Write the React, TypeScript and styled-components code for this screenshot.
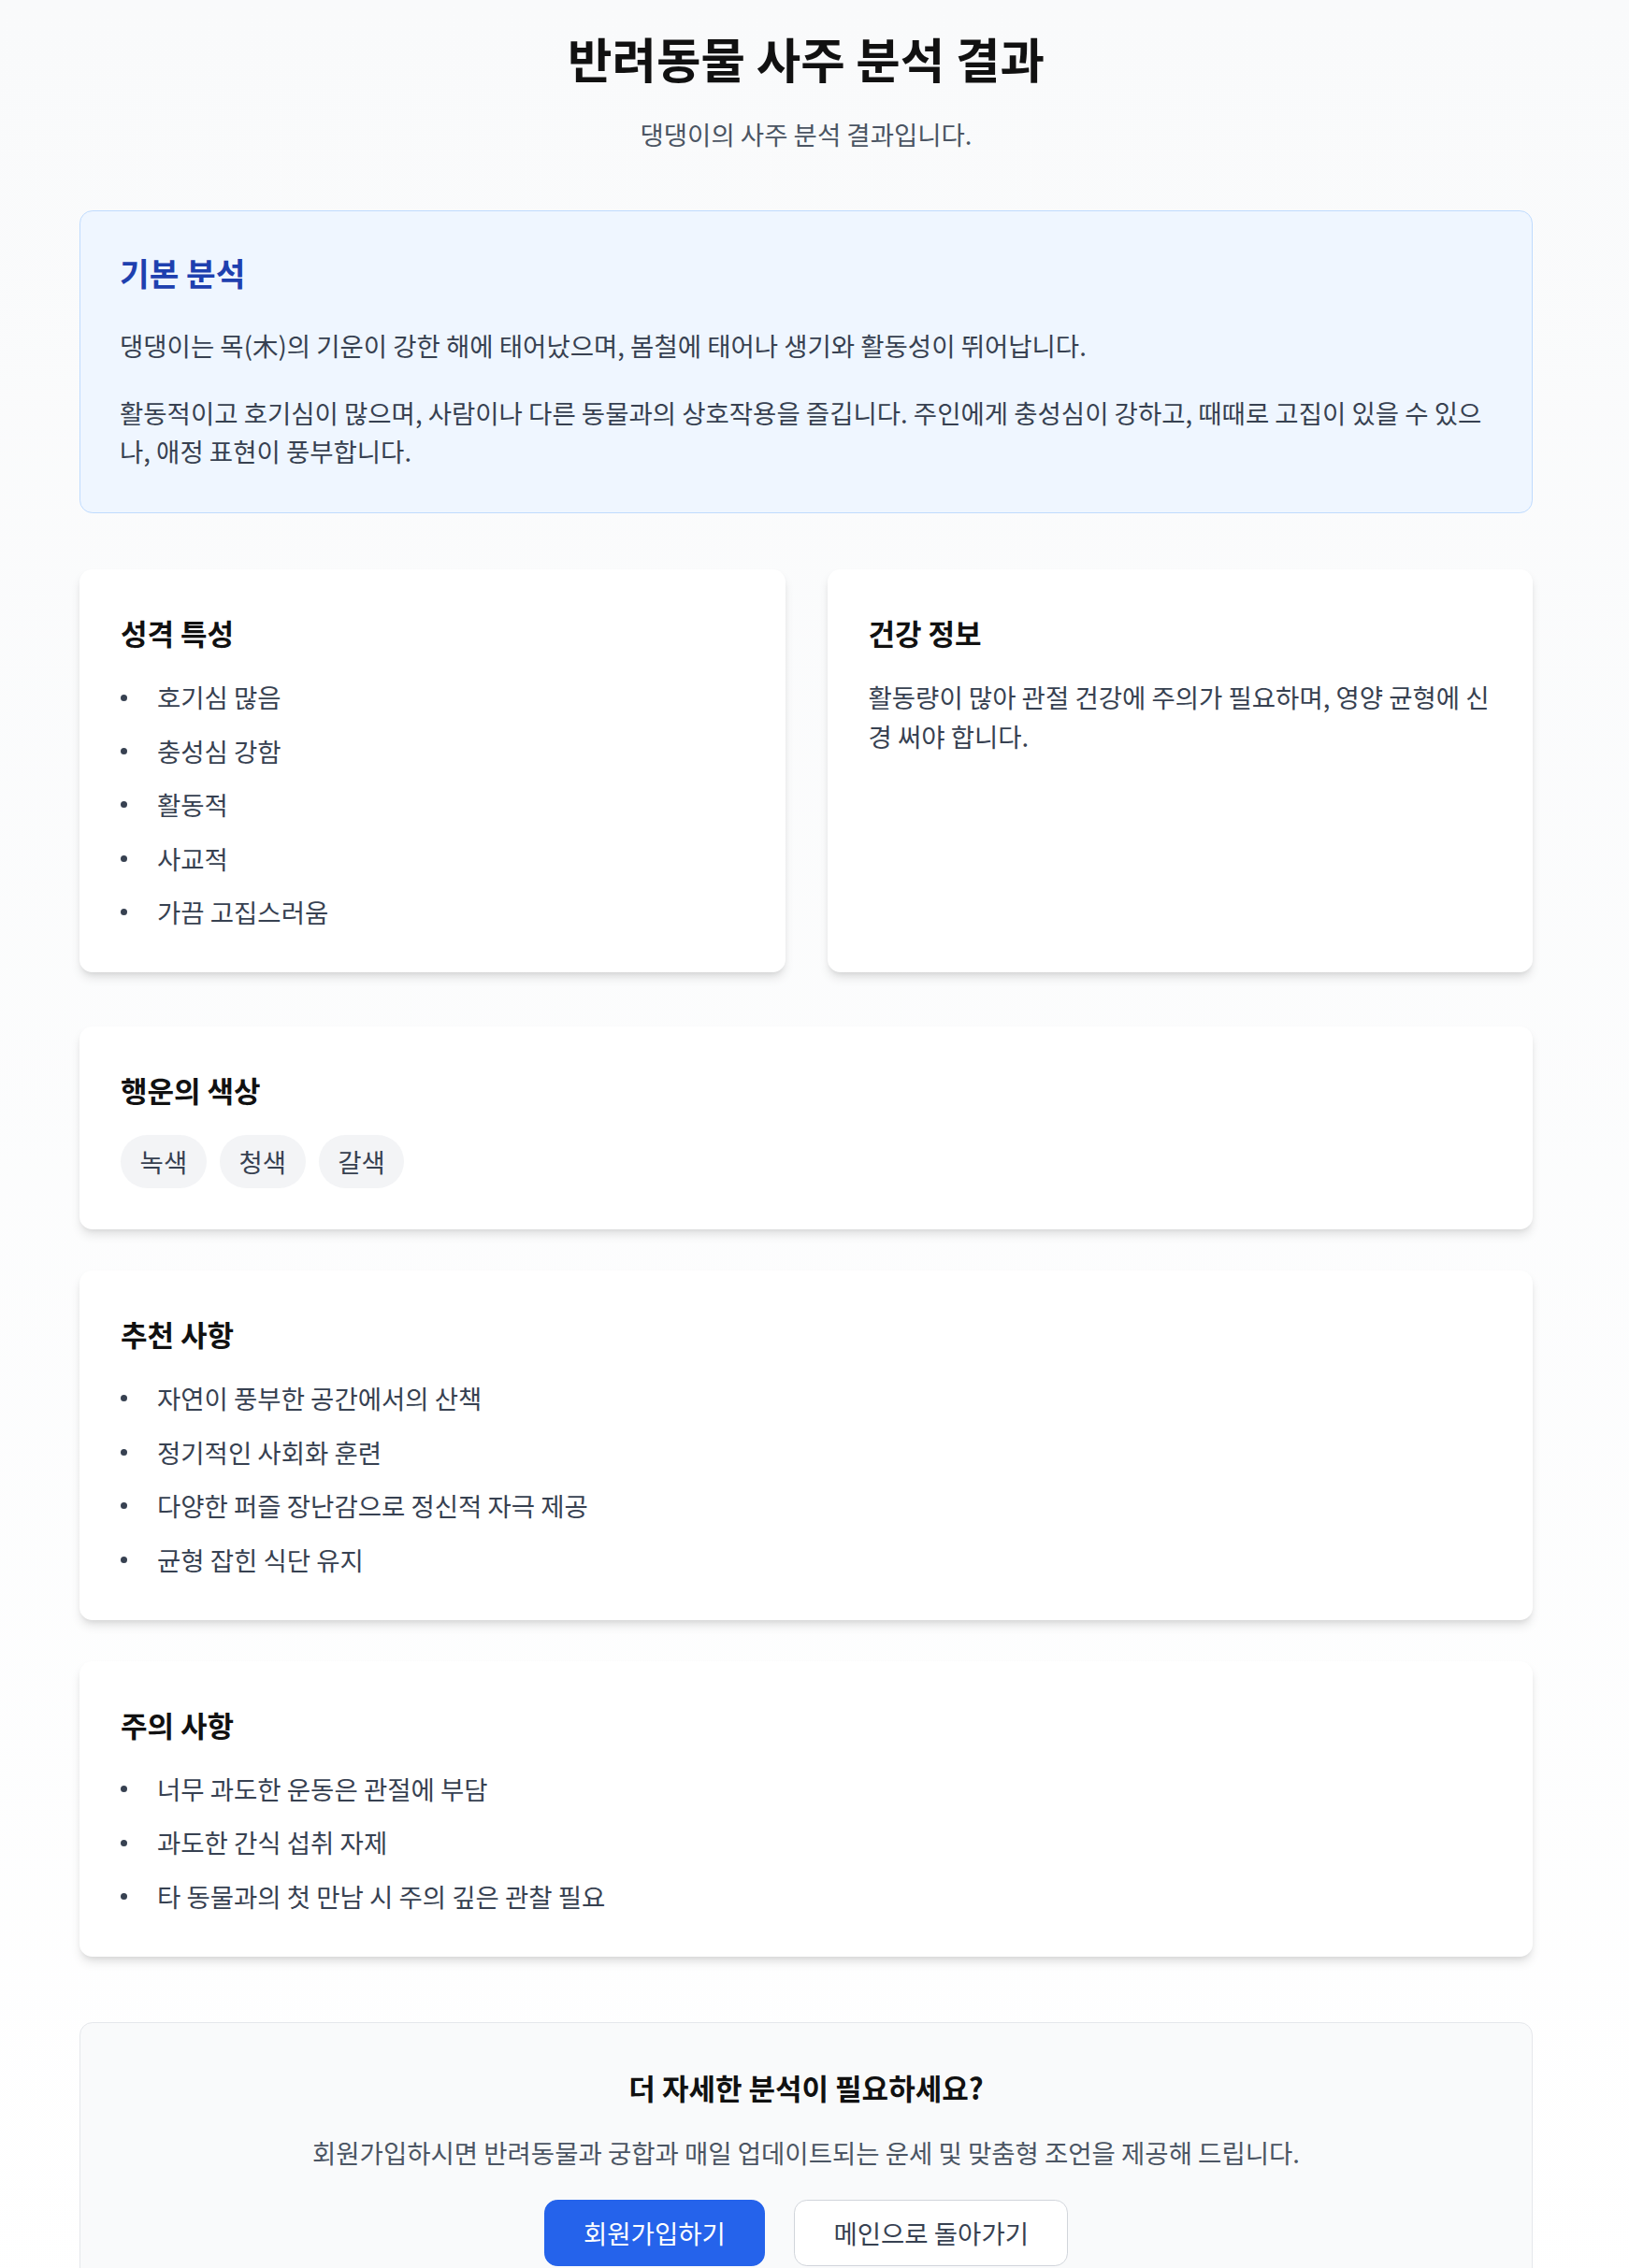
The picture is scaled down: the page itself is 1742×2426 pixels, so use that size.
import { createGlobalStyle, styled } from "styled-components";

const GlobalStyle = createGlobalStyle`
  * {
    box-sizing: border-box;
  }

  html,
  body {
    margin: 0;
    padding: 0;
  }

  body {
    font-family: "Noto Sans CJK KR", "Noto Sans", sans-serif;
    background: linear-gradient(to bottom, #f9fafb, #ffffff);
    min-height: 100vh;
    color: #111;
  }
`;

const Page = styled.div`
  padding: 30.5px 0 40px 85px;
`;

const Container = styled.main`
  width: 1554px;
  display: flex;
  flex-direction: column;
`;

const Header = styled.header`
  text-align: center;
  margin-bottom: 60.3px;
`;

const Title = styled.h1`
  margin: 0 0 31px;
  font-size: 51.6px;
  line-height: 61.9px;
  font-weight: 700;
  color: #111;
`;

const Subtitle = styled.p`
  margin: 0;
  font-size: 27.5px;
  line-height: 41.3px;
  color: #4b5563;
`;

const SummaryCard = styled.section`
  background: #eff6ff;
  border: 1.7px solid #bfdbfe;
  border-radius: 13.8px;
  padding: 40.5px 42px 44.3px;
  margin-bottom: 60.1px;
`;

const SummaryTitle = styled.h2`
  margin: 0 0 33.8px;
  font-size: 34.4px;
  line-height: 48.2px;
  font-weight: 700;
  color: #1e40af;
`;

const Paragraph = styled.p<{ $mb?: number }>`
  margin: 0 0 ${({ $mb }) => $mb ?? 0}px;
  font-size: 27.5px;
  line-height: 41.3px;
  color: #374151;
`;

const Grid = styled.div`
  display: grid;
  grid-template-columns: 1fr 1fr;
  gap: 45px;
  margin-bottom: 57.4px;
`;

const Card = styled.section<{ $mb?: number }>`
  background: #ffffff;
  border-radius: 13.8px;
  padding: 44px;
  margin-bottom: ${({ $mb }) => $mb ?? 0}px;
  box-shadow:
    0 6.9px 10.3px -1.7px rgba(0, 0, 0, 0.1),
    0 3.4px 6.9px -3.4px rgba(0, 0, 0, 0.1);
`;

const CardTitle = styled.h3`
  margin: 0 0 24px;
  font-size: 31px;
  line-height: 48.2px;
  font-weight: 700;
  color: #111;
`;

const List = styled.ul`
  list-style: none;
  margin: 0;
  padding: 0;
  display: flex;
  flex-direction: column;
  gap: 16.1px;
`;

const Item = styled.li`
  display: flex;
  align-items: center;
  font-size: 27.5px;
  line-height: 41.3px;
  color: #374151;

  &::before {
    content: "";
    flex-shrink: 0;
    width: 7px;
    height: 7px;
    border-radius: 50%;
    background: #374151;
    margin-right: 32px;
  }
`;

const Chips = styled.div`
  display: flex;
  gap: 14px;
`;

const Chip = styled.span`
  padding: 8px 20.6px;
  border-radius: 9999px;
  background: #f3f4f6;
  color: #374151;
  font-size: 27.5px;
  line-height: 41.3px;
`;

const Cta = styled.section`
  background: #f9fafb;
  border: 1.7px solid #e5e7eb;
  border-radius: 13.8px;
  padding: 45px 42px 60px;
  text-align: center;
`;

const CtaTitle = styled.h3`
  margin: 0 0 25px;
  font-size: 31px;
  line-height: 48.2px;
  font-weight: 700;
  color: #111;
`;

const CtaText = styled.p`
  margin: 0 0 29.3px;
  font-size: 27.5px;
  line-height: 41.3px;
  color: #4b5563;
`;

const Actions = styled.div`
  display: flex;
  justify-content: center;
  gap: 31px;
`;

const Button = styled.button<{ $variant?: "primary" | "outline" }>`
  font-family: inherit;
  font-size: 27.5px;
  line-height: 41.3px;
  padding: 13.8px 41.3px;
  border-radius: 13.8px;
  cursor: pointer;
  border: 1.7px solid
    ${({ $variant }) => ($variant === "primary" ? "#2563eb" : "#d1d5db")};
  background: ${({ $variant }) =>
    $variant === "primary" ? "#2563eb" : "#ffffff"};
  color: ${({ $variant }) => ($variant === "primary" ? "#ffffff" : "#374151")};
`;

const traits = ["호기심 많음", "충성심 강함", "활동적", "사교적", "가끔 고집스러움"];
const colors = ["녹색", "청색", "갈색"];
const recommendations = [
  "자연이 풍부한 공간에서의 산책",
  "정기적인 사회화 훈련",
  "다양한 퍼즐 장난감으로 정신적 자극 제공",
  "균형 잡힌 식단 유지",
];
const cautions = [
  "너무 과도한 운동은 관절에 부담",
  "과도한 간식 섭취 자제",
  "타 동물과의 첫 만남 시 주의 깊은 관찰 필요",
];

const App = () => {
  return (
    <>
      <GlobalStyle />
      <Page>
        <Container>
          <Header>
            <Title>반려동물 사주 분석 결과</Title>
            <Subtitle>댕댕이의 사주 분석 결과입니다.</Subtitle>
          </Header>

          <SummaryCard>
            <SummaryTitle>기본 분석</SummaryTitle>
            <Paragraph $mb={31.4}>
              댕댕이는 목(木)의 기운이 강한 해에 태어났으며, 봄철에 태어나 생기와
              활동성이 뛰어납니다.
            </Paragraph>
            <Paragraph>
              활동적이고 호기심이 많으며, 사람이나 다른 동물과의 상호작용을
              즐깁니다. 주인에게 충성심이 강하고, 때때로 고집이 있을 수 있으나,
              애정 표현이 풍부합니다.
            </Paragraph>
          </SummaryCard>

          <Grid>
            <Card>
              <CardTitle>성격 특성</CardTitle>
              <List>
                {traits.map((t) => (
                  <Item key={t}>{t}</Item>
                ))}
              </List>
            </Card>
            <Card>
              <CardTitle>건강 정보</CardTitle>
              <Paragraph>
                활동량이 많아 관절 건강에 주의가 필요하며, 영양 균형에 신경 써야
                합니다.
              </Paragraph>
            </Card>
          </Grid>

          <Card $mb={44}>
            <CardTitle>행운의 색상</CardTitle>
            <Chips>
              {colors.map((c) => (
                <Chip key={c}>{c}</Chip>
              ))}
            </Chips>
          </Card>

          <Card $mb={44}>
            <CardTitle>추천 사항</CardTitle>
            <List>
              {recommendations.map((r) => (
                <Item key={r}>{r}</Item>
              ))}
            </List>
          </Card>

          <Card $mb={70}>
            <CardTitle>주의 사항</CardTitle>
            <List>
              {cautions.map((c) => (
                <Item key={c}>{c}</Item>
              ))}
            </List>
          </Card>

          <Cta>
            <CtaTitle>더 자세한 분석이 필요하세요?</CtaTitle>
            <CtaText>
              회원가입하시면 반려동물과 궁합과 매일 업데이트되는 운세 및 맞춤형
              조언을 제공해 드립니다.
            </CtaText>
            <Actions>
              <Button $variant="primary">회원가입하기</Button>
              <Button $variant="outline">메인으로 돌아가기</Button>
            </Actions>
          </Cta>
        </Container>
      </Page>
    </>
  );
};

export default App;
